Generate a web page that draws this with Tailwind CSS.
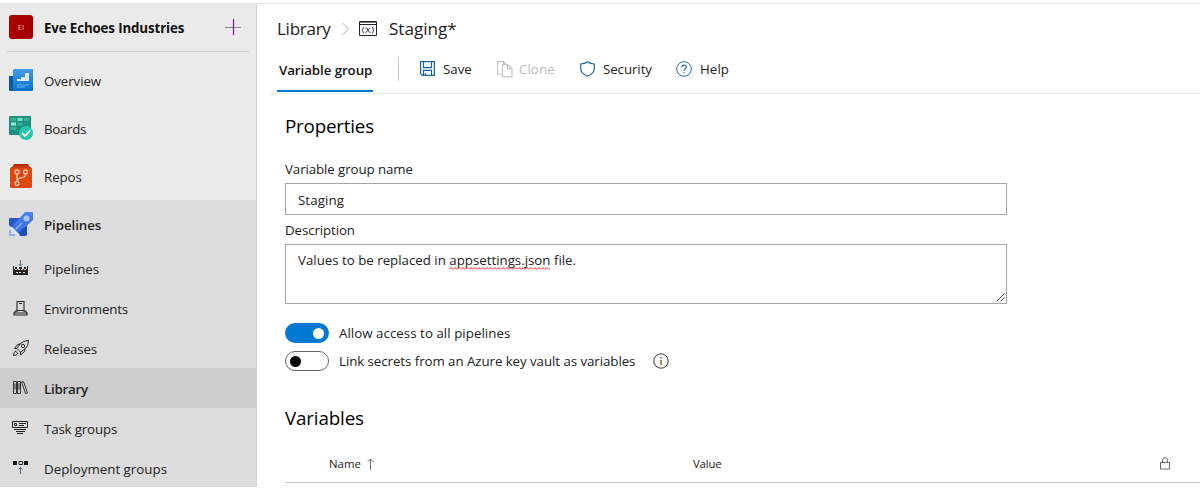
<!DOCTYPE html>
<html lang="en">
<head>
<meta charset="utf-8">
<title>Library - Staging</title>
<script src="https://cdn.jsdelivr.net/npm/@tailwindcss/browser@4"></script>
</head>
<body class="h-[489px] overflow-hidden bg-white font-['Open_Sans',sans-serif] text-[13.3px] leading-5 tracking-[-0.07px] text-[#222]">
<div class="mt-[3px] flex h-[484px] overflow-hidden border-t border-[#e5e5e5]">
  <aside class="flex w-[257px] shrink-0 flex-col border-r border-[#d2d2d2] bg-[#eaeaea] whitespace-nowrap">
    <div class="mx-[7px] mb-1 flex h-12 shrink-0 items-center border-b border-[#cfcfcf] pl-[2px]">
      <div class="mb-px flex size-6 items-center justify-center rounded-[3px] bg-[#a80000] text-[8px] tracking-normal text-[#e5a9a9]">EI</div>
      <div class="ml-[11px] font-bold tracking-[-0.12px] text-[#111]">Eve Echoes Industries</div>
      <svg class="mb-px mr-[8px] ml-auto" width="16" height="16" fill="none"><path d="M0 8.500h16" stroke="#888"/><path d="M8.500 0v16" stroke="#7b1c82" stroke-width="1.200"/></svg>
    </div>
    <div class="flex h-12 shrink-0 items-center gap-[11px] pl-[9px]">
      <svg width="24" height="24" viewBox="0 0 24 24"><defs><linearGradient id="a" x2="0" y2="1"><stop stop-color="#439bea"/><stop offset="1" stop-color="#0872d0"/></linearGradient></defs><path fill="#0759a8" d="M0 8h4v15H1.500Q0 23 0 21.500z"/><path fill="url(#a)" d="M5.500 1H24v20.500q0 1.500-1.500 1.500H4V2.500Q4 1 5.500 1"/><path fill="#dceefb" d="M8 11h4V9h4V5h4v8H8z"/><path fill="#3f96e0" d="M8 16h12v2h-4v2H8z"/></svg>
      <span class="mt-0.5">Overview</span>
    </div>
    <div class="flex h-12 shrink-0 items-center gap-[11px] pl-[9px]">
      <svg width="24" height="24" viewBox="0 0 24 24"><defs><linearGradient id="b" x2="0" y2="1"><stop stop-color="#27907e"/><stop offset="1" stop-color="#1b9181"/></linearGradient></defs><rect width="22" height="19" rx="1" fill="url(#b)"/><path fill="#2eb49b" d="M2 2h5v3H2zM15 2h5v3h-5zM8.500 6.500h5v3h-5zM2 11h5v3H2z"/><path fill="#68e2c8" d="M8.500 2h5v3h-5z"/><path fill="#91efdc" d="M2 6.500h5v3H2z"/><circle cx="17" cy="17" r="7" fill="#20c9ac"/><path d="m13 17 3 3 5.300-5.500" fill="none" stroke="#fff" stroke-width="1.800"/></svg>
      <span class="mt-0.5 tracking-[-0.3px]">Boards</span>
    </div>
    <div class="flex h-12 shrink-0 items-center gap-[11px] pl-[9px]">
      <svg width="24" height="24" viewBox="0 0 24 24"><path fill="#b62d04" d="M5 0h14l1 2 2.500 2v4H1.500V4L4 2z"/><path fill="#df470c" d="M1 4h22v18.500q0 1.500-1.500 1.500h-19Q1 24 1 22.500z"/><path fill="#c63b09" d="M4 2h16v2H4z"/><g fill="none" stroke="#fbc9b5" stroke-width="1.300"><circle cx="8" cy="8" r="2"/><circle cx="16.500" cy="8" r="2"/><circle cx="8" cy="19.500" r="2"/><path d="M8 10v7.500m8.500-7.500c0 2.500-.5 3.200-4.500 3.800-3 .6-4 1.500-4 3.700"/></g></svg>
      <span class="mt-0.5">Repos</span>
    </div>
    <div class="flex h-[288px] shrink-0 flex-col bg-[#dcdcdc]">
      <div class="flex h-12 shrink-0 items-center gap-[11px] pl-[9px]">
        <svg width="24" height="24" viewBox="0 0 24 24"><defs><linearGradient id="c" x2="0" y2="1"><stop stop-color="#4a84ec"/><stop offset="1" stop-color="#356be0"/></linearGradient></defs><path fill="#2558c4" d="M1 6h10l-5 9H2L0 13V7q0-1 1-1"/><path fill="#1c4dba" d="M18 13v9q0 2-2 2h-5l-2-5z"/><path fill="url(#c)" d="M16 0h7q1 0 1 1v7L9 21.500 2.500 15z"/><circle cx="17.500" cy="6.500" r="3" fill="#a6c4fa"/><path d="m6.500 17.500 6.500-6.500" stroke="#8bb0f6" stroke-width="1.500"/><path fill="#dce7fc" d="m3 15 6 6-2 2-6-6z"/><path fill="#8eb1f5" d="M0 18h2v4h4v2H0z"/></svg>
        <span class="mt-0.5 font-semibold">Pipelines</span>
      </div>
      <div class="flex h-10 shrink-0 items-center gap-[15px] pl-[13px]">
        <svg width="16" height="16" viewBox="0 0 16 16"><path fill="none" stroke="#526e89" d="M7.500 0v6M5.500 4 7.500 6 9.500 4"/><path fill="#222" d="M0 6h1v3h13V6h1v9H0z"/><path fill="#222" d="M2 7h2v2H2zm4 0h3v2H6zm5 0h2v2h-2z"/><path fill="#ddd" d="M2 9h2v1H2zm3 0h2v1H5zm3 0h2v1H8zm3 0h2v1h-2zM3 12h2v1H3zm3 0h2v1H6zm4 0h2v1h-2z"/></svg>
        <span class="mt-0.5">Pipelines</span>
      </div>
      <div class="flex h-10 shrink-0 items-center gap-[15px] pl-[13px]">
        <svg width="16" height="16" viewBox="0 0 16 16" fill="none" stroke="#252525" stroke-width="1.100"><path d="M4 12V1.500h7V12M6 3.500h3M4 10.500h7M3.500 11H2.500L1 13v2h13v-2l-1.500-2H11M1 13h13"/></svg>
        <span class="mt-0.5 tracking-[-0.18px]">Environments</span>
      </div>
      <div class="flex h-10 shrink-0 items-center gap-[15px] pl-[13px]">
        <svg width="16" height="16" viewBox="0 0 16 16" fill="none" stroke="#252525"><path d="M15.500.5Q10 .5 7 4L4 8.500 7.500 12 12 9q3.500-3 3.500-8.500M7 4 4.500 4.500 1.500 8.500 4 8.500M12 9l-.5 2.500L7.500 15v-3M2.500 11l2.500 2.500M3 11q-2.500.5-2.500 4.500Q4.500 15.500 5 13"/><circle cx="10" cy="6" r="1.700"/></svg>
        <span class="mt-0.5 tracking-[-0.12px]">Releases</span>
      </div>
      <div class="flex h-10 shrink-0 items-center gap-[15px] bg-[#cecece] pl-[13px]">
        <svg width="16" height="16" viewBox="0 0 16 16" fill="none" stroke="#333"><path d="M.500 1.500h3v12h-3zM4.500 1.500h3v12h-3zM2 3.500v6M6 3.500v6M8.500 2l2-.5 4 11.500-2 .5z"/></svg>
        <span class="mt-0.5 font-semibold tracking-[-0.22px]">Library</span>
      </div>
      <div class="flex h-10 shrink-0 items-center gap-[15px] pl-[13px]">
        <svg class="-ml-px mr-px" width="16" height="16" viewBox="0 0 16 16" fill="none" stroke="#222"><path d="M.5 1.500h15v6H.500zM7 3.500h7M7 5.500h5M2 9.500h12M4 11.500h9M5 13.500h6" /><path d="M2.500 3.500h2v2h-2z"/></svg>
        <span class="mt-0.5 tracking-[-0.15px]">Task groups</span>
      </div>
      <div class="flex h-10 shrink-0 items-center gap-[15px] pl-[13px]">
        <svg width="16" height="16" viewBox="0 0 16 16" fill="none"><path fill="#151515" d="M0 1h4v4H0zM11 1h4v4h-4z"/><path stroke="#222" d="M6 1.500h3.500v3H6z"/><path stroke="#4f718e" d="M7.500 14V7.500M5.500 9.500l2-2 2 2"/></svg>
        <span class="mt-0.5 tracking-[0.02px]">Deployment groups</span>
      </div>
    </div>
  </aside>

  <main class="min-w-0 flex-1 whitespace-nowrap">
    <div class="flex h-[50px] items-center pl-5 text-[17.1px] leading-6 text-[#1c1c1c]">
      <span class="w-[54px] tracking-[-0.3px]">Library</span>
      <svg class="mb-px ml-[11px]" width="8" height="14" fill="none" stroke="#aaa"><path d="m.500 1 6 6-6 6"/></svg>
      <svg class="mb-[2px] ml-[9px]" width="18" height="15" viewBox="0 0 18 15" fill="none" stroke="#222"><path d="M.500.500h17v14H.500z"/><path d="M1 1.500h16" stroke="#777"/><path d="M1 3.500h16"/><path d="M4.500 6q-2 3.300 0 6.500M13.500 6q2 3.300 0 6.500M6.500 7q2-.5 2.500 2t2.500 2.500M11.500 7Q10 7 9 9t-2.700 2.500" stroke="#345"/></svg>
      <span class="ml-[12px] tracking-normal">Staging*</span>
    </div>
    <div class="ml-[12px] flex h-10 border-b border-[#e8e8e8] pl-[8px]">
      <div class="flex h-[38px] w-[96px] items-center border-b-2 border-[#0078d4] pl-[2px] font-semibold text-[#111]"><span class="mb-[5px]">Variable group</span></div>
      <div class="mt-[3px] ml-[25px] h-6 w-px bg-[#c8c8c8]"></div>
      <div class="flex h-[29px] items-center">
        <svg class="ml-[21px]" width="15" height="15" viewBox="0 0 15 15" fill="none" stroke="#1865a5" stroke-width="1.200"><path d="M.600.600h13.800v13.800H2.500L.600 12.500zM3.500.6v6h8v-6M3.500 14.400v-5h8v5M5.500 12v2.400"/></svg>
        <span class="ml-[8px] w-[29px] tracking-normal">Save</span>
        <svg class="mt-px ml-[25px]" width="16" height="17" viewBox="0 0 16 17" fill="none" stroke="#c4c4c4" stroke-width="1.200"><path d="M5 13H.600V.600h6L9 3M6.500.6V3.500M5.500 3.600h5.500l4 4v8.300H5.500zM10.500 4v4H15"/></svg>
        <span class="ml-[6px] w-[36px] tracking-[0.06px] text-[#bdbdbd]">Clone</span>
        <svg class="ml-[25px]" width="15" height="16" viewBox="0 0 15 16" fill="none" stroke="#1f609b" stroke-width="1.200"><path d="M7.500.800Q5 3 .700 3v4.500c0 4 3.500 6.300 6.800 7.700 3.300-1.400 6.800-3.700 6.800-7.700V3Q10 3 7.500.800z"/></svg>
        <span class="ml-[8px] w-[49px]">Security</span>
        <svg class="ml-[24px]" width="16" height="16" viewBox="0 0 16 16" fill="none" stroke="#2469a4"><circle cx="8" cy="8" r="7.300"/><path stroke-width="1.200" d="M5.800 6.300Q5.800 4.200 8 4.200t2.200 2c0 1.600-2.200 1.700-2.200 3.600M8 11v1.300"/></svg>
        <span class="ml-[8px] tracking-[0.06px]">Help</span>
      </div>
    </div>

    <div class="pl-[28px]">
      <h2 class="mt-[18px] h-7 text-[18.8px] leading-7 tracking-[-0.2px] text-black">Properties</h2>
      <div class="mt-[19px] tracking-[-0.09px]">Variable group name</div>
      <div class="mt-[4px] flex h-8 w-[722px] items-center border border-[#a6a6a6] pt-px pl-[12px] tracking-[0.08px]">Staging</div>
      <div class="mt-[5px] tracking-[-0.1px]">Description</div>
      <div class="relative mt-[4px] h-[60px] w-[722px] border border-[#a6a6a6] pt-[5px] pl-[12px] tracking-[-0.01px]">Values to be replaced in <span class="relative">appsettings.json<svg class="absolute bottom-[-1px] left-0" width="101" height="3" fill="none" stroke="#f01818"><defs><pattern id="w" width="4" height="3" patternUnits="userSpaceOnUse"><path d="M0 2.500 2 .500 4 2.500"/></pattern></defs><rect width="101" height="3" fill="url(#w)" stroke="none"/></svg></span> file.
        <svg class="absolute right-px bottom-px" width="9" height="9" stroke="#555"><path d="m.500 8.500 8-8m-4 8 4-4"/></svg>
      </div>
      <div class="mt-[19px] flex h-5 items-center">
        <div class="flex h-5 w-11 items-center justify-end rounded-full bg-[#0078d4] pr-[5px]"><div class="size-[11px] rounded-full bg-white"></div></div>
        <span class="ml-[10px] tracking-[0.04px]">Allow access to all pipelines</span>
      </div>
      <div class="mt-[8px] flex h-5 items-center">
        <div class="flex h-5 w-11 items-center rounded-full border border-[#666] pl-[4px]"><div class="size-[11px] rounded-full bg-black"></div></div>
        <span class="ml-[10px] w-[297px] tracking-[-0.06px]">Link secrets from an Azure key vault as variables</span>
        <svg class="ml-[17px]" width="16" height="16" fill="none" stroke="#333"><circle cx="8" cy="8" r="7.200"/><path stroke="#806020" stroke-width="1.400" d="M8 7v5M8 4v1.500"/></svg>
      </div>
      <h2 class="mt-[33px] h-7 text-[18.8px] leading-7 tracking-[-0.15px] text-black">Variables</h2>
      <div class="mt-[13px] flex h-[38px] items-center border-b border-[#c8c8c8] pl-11 text-[11.4px] tracking-normal">
        <span class="w-[33px]">Name</span>
        <svg class="ml-[4px]" width="9" height="12" fill="none" stroke="#776a83"><path d="M4.500 12V1M1.500 4l3-3 3 3"/></svg>
        <span class="ml-[318px] tracking-[-0.2px]">Value</span>
        <svg class="mr-[30px] ml-auto" width="10" height="13" fill="none" stroke="#666"><path d="M.500 5.500h9v6.500h-9zM2.500 5.500V3.200Q2.500.700 5 .700t2.500 2.500v2.300"/></svg>
      </div>
    </div>
  </main>
</div>
</body>
</html>
